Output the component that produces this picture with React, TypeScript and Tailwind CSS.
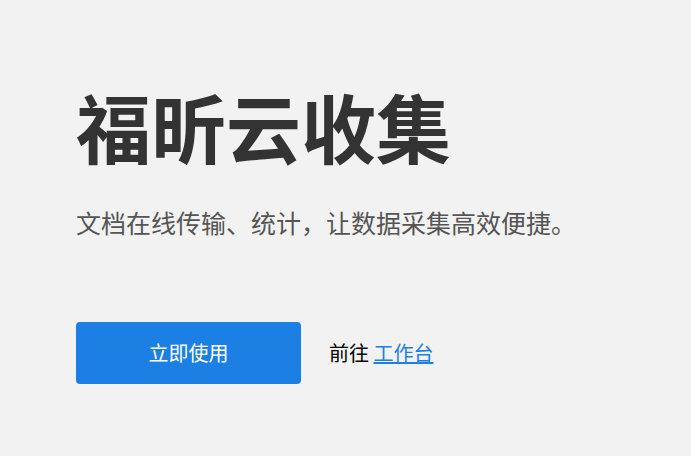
export default function App() {
  return (
    <div
      className="min-h-[456px] w-full bg-[#f2f2f2] pl-[76px] pt-[88px]"
      style={{ fontFamily: '"Noto Sans CJK SC", "Noto Sans", sans-serif' }}
    >
      <h1 className="text-[75px] font-bold leading-[1] text-[#333333]">福昕云收集</h1>
      <p className="mt-[47px] text-[25px] leading-[1] text-[#555555]">
        文档在线传输、统计，让数据采集高效便捷。
      </p>
      <div className="mt-[87px] flex items-center">
        <button className="h-[62px] w-[225px] rounded-[4px] bg-[#1b7fe3] text-[20px] text-white">
          立即使用
        </button>
        <span className="ml-[28px] text-[20px] text-black">
          前往{' '}
          <a href="#" className="text-[#1b7fe3] underline">
            工作台
          </a>
        </span>
      </div>
    </div>
  );
}
